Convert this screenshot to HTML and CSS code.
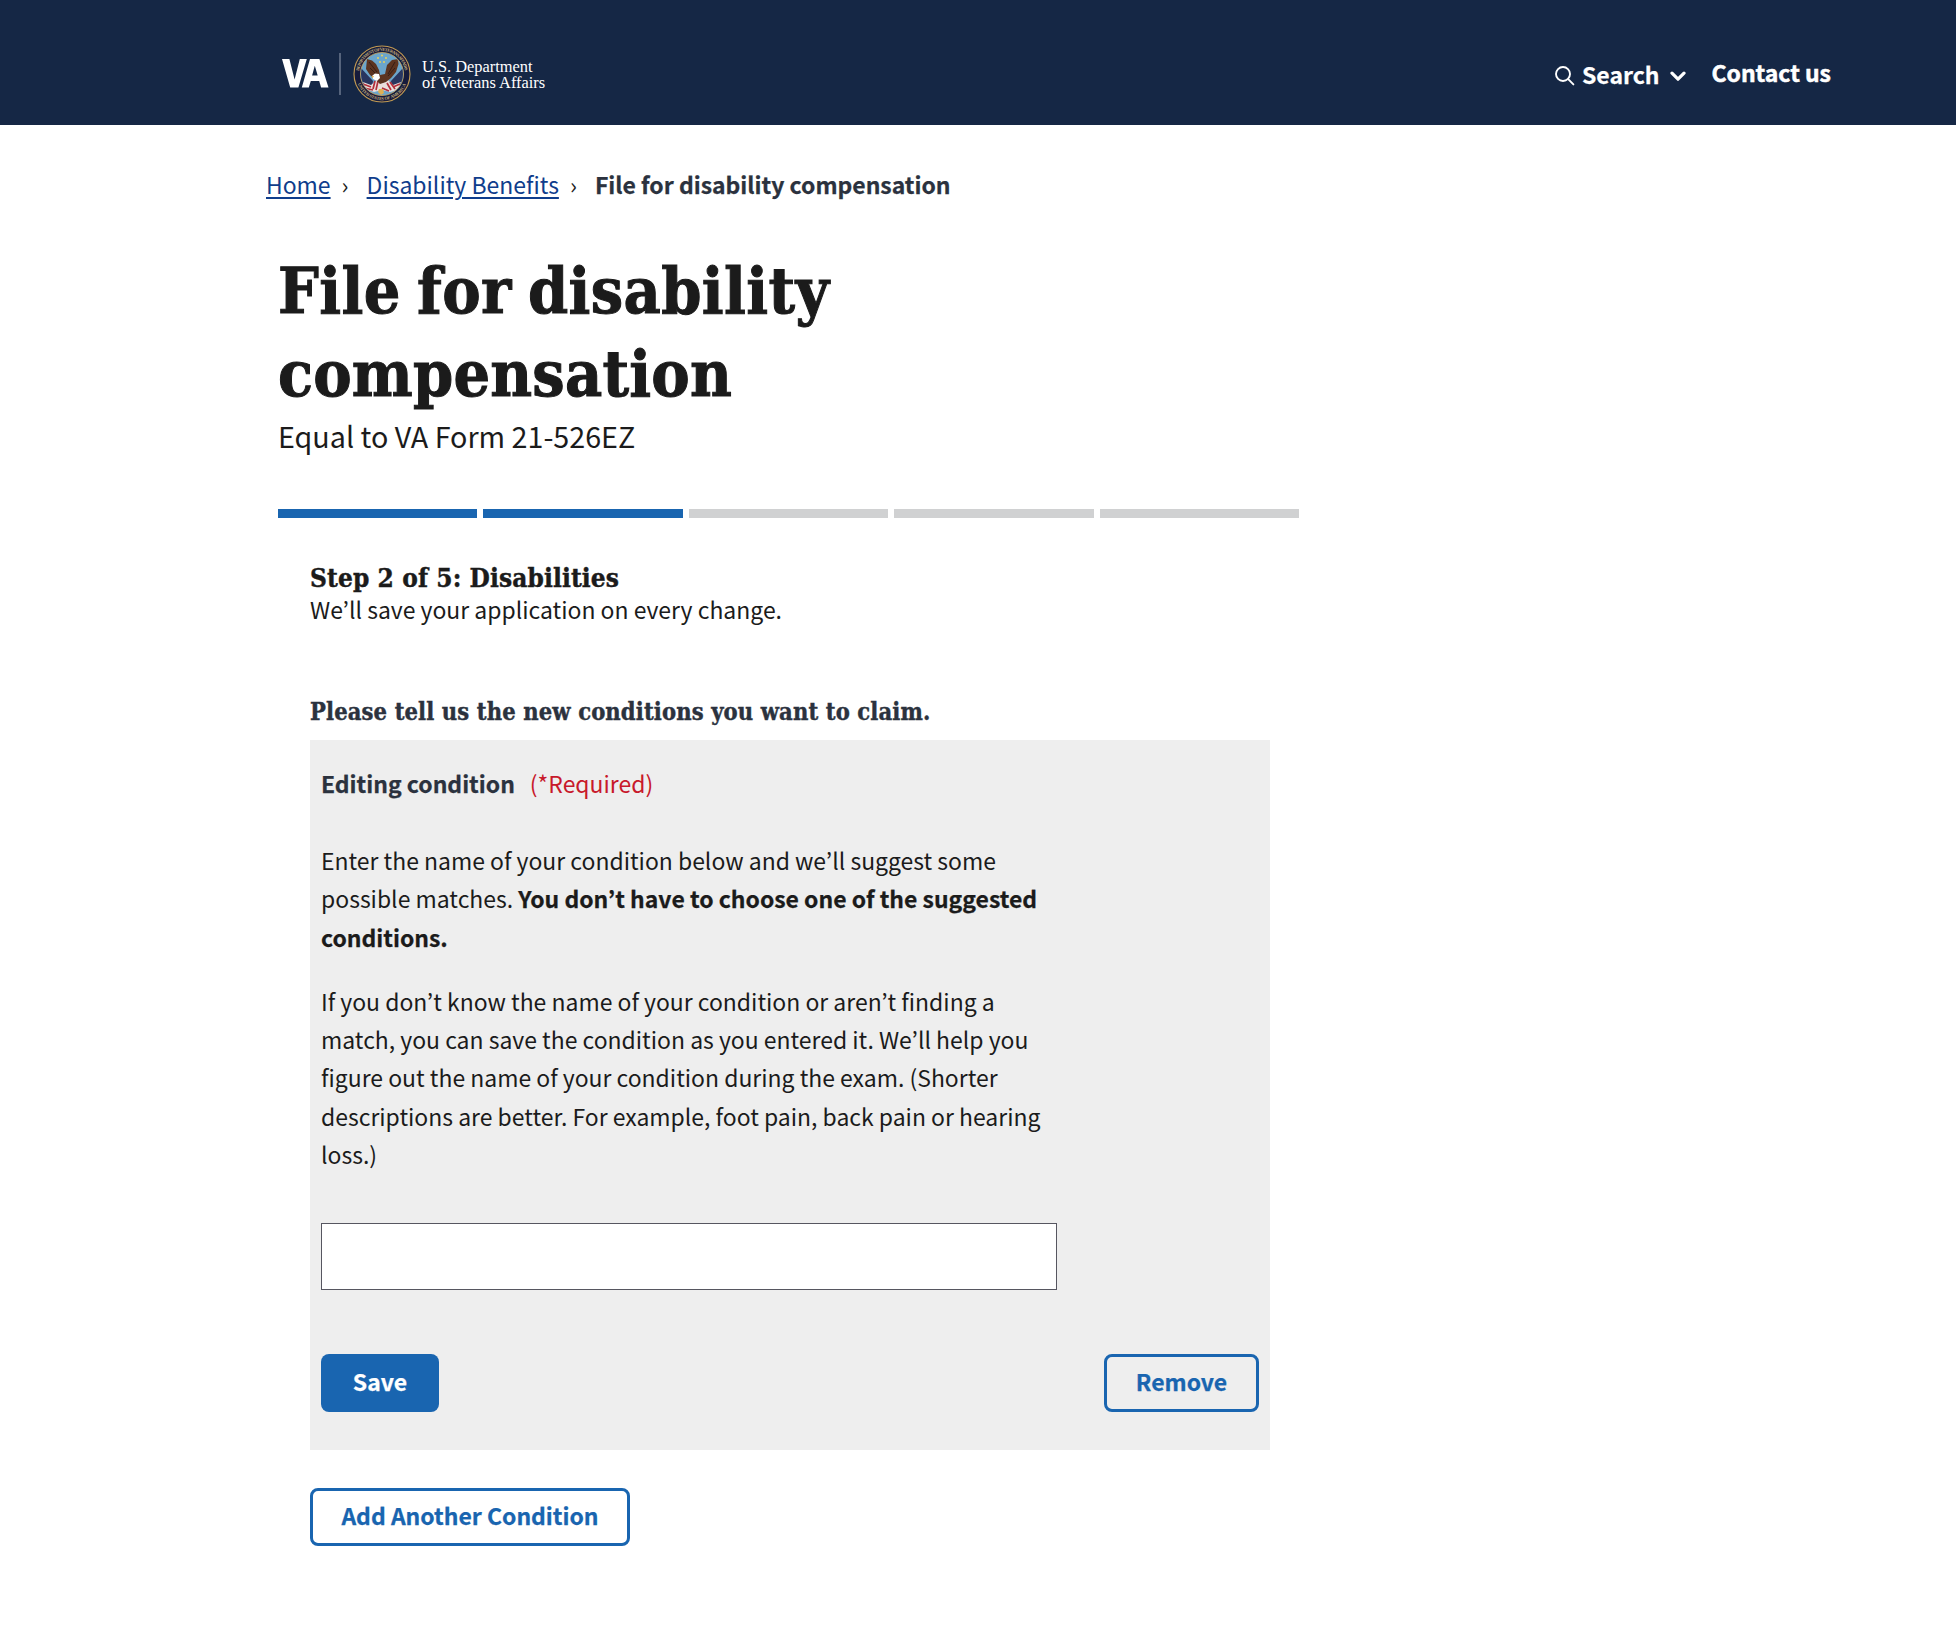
FILE: index.html
```html
<!DOCTYPE html>
<html lang="en">
<head>
<meta charset="utf-8">
<title>File for disability compensation</title>
<link rel="stylesheet" href="styles.css">
</head>
<body>
<header class="site-header">
  <a class="logo" href="#">
    <svg class="va-mark" width="47" height="29" viewBox="0 0 47 29" aria-label="VA">
      <path fill="#fff" d="M0 0h7.400l5.200 20.500L17.800 0h7L16.400 28.500H8.200zM28 0h9.400L46.500 28.500h-7.400l-1.900-6.600h-8.400l-2 6.600h-7zM32.800 6.800l-2.700 9.800h5.600z"/>
    </svg>
    <span class="logo-rule"></span>
    <svg class="seal" width="58" height="58" viewBox="0 0 58 58">
      <defs>
        <path id="ring-top" d="M5.800 29a23.200 23.200 0 0 1 46.400 0"/>
        <path id="ring-bottom" d="M2.800 29a26.200 26.200 0 0 0 52.400 0"/>
        <clipPath id="disc"><circle cx="29" cy="29" r="21"/></clipPath>
      </defs>
      <circle cx="29" cy="29" r="28" fill="#161b3c" stroke="#c29a52" stroke-width="1.100"/>
      <text class="seal-text"><textPath href="#ring-top" startOffset="3" textLength="66">DEPARTMENT OF VETERANS AFFAIRS</textPath></text>
      <text class="seal-text"><textPath href="#ring-bottom" startOffset="10" textLength="61">UNITED STATES OF AMERICA</textPath></text>
      <circle cx="29" cy="29" r="21.500" fill="#6ba5cb" stroke="#d2ad62" stroke-width=".8"/>
      <g clip-path="url(#disc)">
        <path fill="#29365f" d="M8 23l12 13-1 7-11-4zM50 23L38 36l1 7 11-4z"/>
        <path fill="#e9dfdc" d="M10 37l8 3 6-5 5 3 6-3 5 5 8-3-3 8-8 2-8-2-8 2-8-3z"/>
        <path stroke="#b22f3b" stroke-width="1.700" fill="none" d="M10 39l8 3M11 43l9 2M22 36l-2 8M25 36l-2 9M34 38l4 7M37 37l5 7M40 42l7-3M29 43l7 3"/>
        <path fill="#5c3420" d="M14 14l5 1.500 4 3.500 3 6 1 5 5-1 2-9 5-5 6-1 .500 5-2.500 8-5 6-5 4-6 2-5-5-5-4-4-6z"/>
        <path stroke="#351e17" stroke-width="1" fill="none" d="M16 17l8 10M17 23l6 6M42 17l-7 12M42 23l-7 8"/>
        <path fill="#fff" d="M19 31l3-2.500 4 .5 1 4-3 3-4-2z"/>
        <path fill="#e0b054" d="M18.500 31h2.500l-1.500 2.500zM26 44h4l1 4-3 2-3-3z"/>
        <g fill="#e2ce62"><circle cx="29" cy="10.500" r="1.100"/><circle cx="25" cy="13" r="1.100"/><circle cx="33" cy="13" r="1.100"/><circle cx="27" cy="17" r="1.100"/><circle cx="31" cy="17" r="1.100"/></g>
      </g>
    </svg>
    <span class="dept"><span>U.S. Department</span><span>of Veterans Affairs</span></span>
  </a>
  <nav class="tools">
    <button class="search" type="button">
      <svg width="20" height="20" viewBox="0 0 20 20" fill="none" stroke="#fff" stroke-width="1.900" stroke-linecap="round"><circle cx="8" cy="8" r="7"/><path d="M13.200 13.200L18.400 18.400"/></svg>
      <span class="search-label">Search</span>
      <svg class="chevron" width="16" height="11" viewBox="0 0 16 11" fill="none" stroke="#fff" stroke-width="3.200" stroke-linecap="round" stroke-linejoin="round"><path d="M2 2.200l6 6 6-6"/></svg>
    </button>
    <a class="contact" href="#">Contact us</a>
  </nav>
</header>
<nav class="crumbs">
  <a href="#">Home</a><span class="sep">›</span><a href="#">Disability Benefits</a><span class="sep">›</span><strong>File for disability compensation</strong>
</nav>
<main class="content">
  <h1 class="title"><span class="line-first">File for disability</span> <span>compensation</span></h1>
  <p class="subtitle">Equal to VA Form 21-526EZ</p>
  <div class="progress"><i class="done"></i><i class="done"></i><i></i><i></i><i></i></div>
  <section class="form">
    <h2 class="step">Step 2 of 5: Disabilities</h2>
    <p class="autosave">We’ll save your application on every change.</p>
    <h3 class="legend">Please tell us the new conditions you want to claim.</h3>
    <div class="card">
      <div class="card-title"><strong>Editing condition</strong><span class="required">(*Required)</span></div>
      <p>Enter the name of your condition below and we’ll suggest some possible matches. <strong>You don’t have to choose one of the suggested conditions.</strong></p>
      <p>If you don’t know the name of your condition or aren’t finding a match, you can save the condition as you entered it. We’ll help you figure out the name of your condition during the exam. (Shorter descriptions are better. For example, foot pain, back pain or hearing loss.)</p>
      <input class="field" type="text" aria-label="Condition">
      <div class="actions">
        <button class="btn primary" type="button">Save</button>
        <button class="btn remove" type="button">Remove</button>
      </div>
    </div>
    <button class="btn add" type="button">Add Another Condition</button>
  </section>
</main>
</body>
</html>
```
FILE: styles.css
```css
* { box-sizing: border-box; }
body {
  margin: 0;
  background: #fff;
  color: #1b1b1b;
  font: 22.96px/38.4px "Noto Sans CJK KR", "Open Sans", sans-serif;
}
h1, h2, h3, p { margin: 0; }
button { font: inherit; border: 0; background: none; padding: 0; }
strong, .btn, .tools { -webkit-text-stroke: .25px currentColor; }

.site-header {
  height: 125px;
  padding: 0 125px 0 282px;
  background: #152745;
  color: #fff;
  display: flex;
  justify-content: space-between;
}
.logo {
  display: flex;
  align-items: center;
  height: 148px;
  color: #fff;
  text-decoration: none;
}
.va-mark { margin-bottom: 1px; }
.logo-rule { width: 2px; height: 42px; margin: 0 12px 0 10px; background: #56647c; }
.seal-text { font: bold 4.4px "Liberation Serif", serif; fill: #c9b27c; }
.dept {
  display: flex;
  flex-direction: column;
  margin: 2px 0 0 11px;
  font: 16.4px/16px "Liberation Serif", serif;
  white-space: nowrap;
}
.tools { display: flex; align-items: flex-start; font-weight: 700; }
.search { display: flex; align-items: center; height: 38px; margin-top: 57px; color: #fff; font-weight: 700; }
.search-label { margin-left: 7px; padding-bottom: 3px; }
.chevron { margin-left: 11px; }
.contact { margin: 53px 0 0 25px; color: #fff; text-decoration: none; -webkit-text-stroke: .5px #fff; }

.crumbs { display: flex; padding: 40px 0 0 266px; height: 124px; }
.crumbs a { color: #0f3d8c; text-decoration: underline; text-underline-offset: 3px; text-decoration-thickness: 2px; }
.crumbs strong { color: #2b323e; }
.sep { width: 36px; padding-left: 11px; }

.content { width: 1021px; margin-left: 278px; }
.title, .step, .legend {
  font: 700 64px/83.2px "DejaVu Serif Condensed", "DejaVu Serif", serif;
  font-stretch: condensed;
  white-space: nowrap;
}
.title { -webkit-text-stroke: 1px currentColor; letter-spacing: .2px; }
.title span { display: block; }
.title .line-first { letter-spacing: .35px; word-spacing: -4px; }
.subtitle { margin-top: -1px; font-size: 28.7px; line-height: 44px; }
.progress { display: grid; grid-template-columns: repeat(5, 1fr); gap: 6px; margin-top: 51px; }
.progress i { height: 9px; background: #d0d1d2; }
.progress .done { background: #1965b0; }

.form { width: 960px; margin: 43px 0 0 32px; }
.step, .legend { -webkit-text-stroke: .4px currentColor; }
.step { font-size: 26px; line-height: 34px; letter-spacing: .1px; }
.autosave { margin-top: -2px; line-height: 32px; }
.legend { margin-top: 70px; font-size: 23.5px; line-height: 34px; letter-spacing: .12px; color: #2b323e; }
.card { height: 710px; margin-top: 11px; padding: 24px 11px 0; background: #eee; }
.card-title { color: #2b323e; margin-bottom: 38px; }
.required { margin-left: 15px; color: #c8192b; }
.card p { width: 736px; margin-bottom: 25.6px; }
.field { display: block; width: 736px; height: 67px; margin-top: 49px; border: 1px solid #565660; background: #fff; }
.actions { display: flex; justify-content: space-between; margin-top: 64px; }
.btn { height: 58px; padding-bottom: 4px; border-radius: 8px; font-weight: 700; line-height: 32px; color: #1965b0; }
.primary { width: 118px; background: #1965b0; color: #fff; }
.remove { width: 155px; border: 3px solid #1965b0; }
.add { width: 320px; margin-top: 38px; border: 3px solid #1965b0; }
```
